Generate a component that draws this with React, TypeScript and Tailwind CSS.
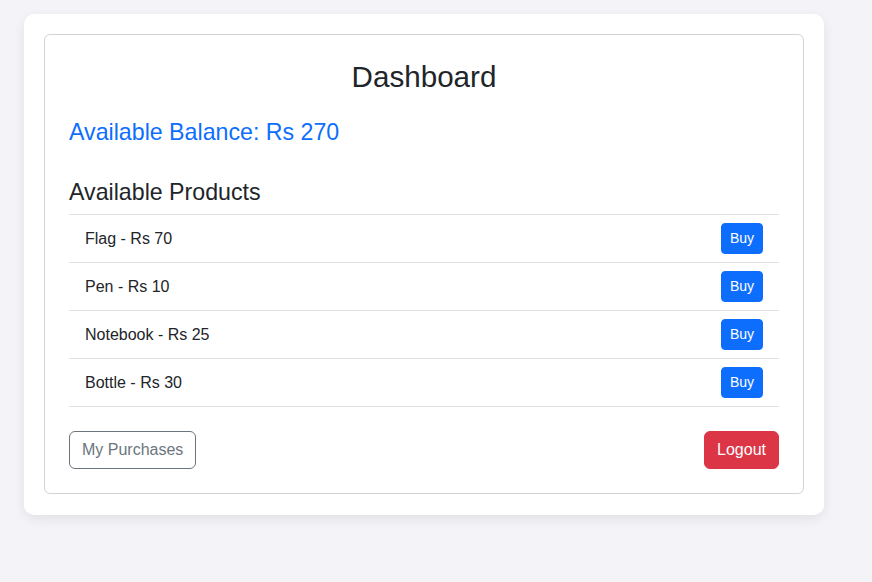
import React from "react";

const products = [
  { name: "Flag", price: 70 },
  { name: "Pen", price: 10 },
  { name: "Notebook", price: 25 },
  { name: "Bottle", price: 30 },
];

export default function App() {
  return (
    <div
      className="min-h-[582px] w-full bg-[#f3f3f8] pt-[14px] pl-[24px] text-[#212529]"
      style={{ fontFamily: '"Liberation Sans", Arial, sans-serif' }}
    >
      <div className="w-[800px] rounded-[10px] bg-white px-[20px] pt-[20px] pb-[21px] shadow-[0_4px_12px_rgba(0,0,0,0.08)]">
        <div className="rounded-[6px] border border-[#d3d3d3] p-[24px]">
          <h2 className="mb-[24px] text-center text-[29.6px] leading-[1.2] font-normal">Dashboard</h2>
          <h4 className="mb-[33px] text-[23.2px] leading-[1.2] text-[#0d6efd]">Available Balance: Rs 270</h4>
          <h4 className="mb-[7px] text-[23.2px] leading-[1.2]">Available Products</h4>
          <ul className="border-t border-[#dee2e6]">
            {products.map((p) => (
              <li
                key={p.name}
                className="flex items-center justify-between border-b border-[#dee2e6] px-[16px] py-[8px] text-[16px] leading-[24px]"
              >
                <span>
                  {p.name} - Rs {p.price}
                </span>
                <button className="h-[31px] rounded-[4px] border border-[#0d6efd] bg-[#0d6efd] px-[8px] text-[14px] leading-[21px] text-white">
                  Buy
                </button>
              </li>
            ))}
          </ul>
          <div className="mt-[24px] flex items-center justify-between">
            <button className="h-[38px] rounded-[6px] border border-[#6c757d] px-[12px] text-[16px] leading-[24px] text-[#6c757d]">
              My Purchases
            </button>
            <button className="h-[38px] rounded-[6px] border border-[#dc3545] bg-[#dc3545] px-[12px] text-[16px] leading-[24px] text-white">
              Logout
            </button>
          </div>
        </div>
      </div>
    </div>
  );
}
